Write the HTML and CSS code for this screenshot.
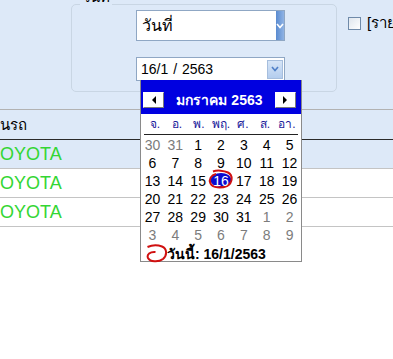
FILE: index.html
```html
<!DOCTYPE html>
<html lang="th">
<head>
  <meta charset="UTF-8">
  <title>ค้นหาตามวันที่</title>
  <meta name="viewport" content="width=device-width,initial-scale=1">
  <link rel="stylesheet" href="styles.css">
</head>
<body>
  <div class="filter">
    <div class="fs">
      <span class="fs-legend">วันที่</span>
      <div class="sel">
        <span class="sel-text">วันที่</span>
        <span class="sel-arrow">
          <svg width="8" height="8" viewBox="0 0 8 8"><path d="M1 2 L4 5.5 L7 2" fill="none" stroke="#fff" stroke-width="1.6"/></svg>
        </span>
      </div>
      <div class="date">
        <span class="date-text">16/1 / 2563</span>
        <span class="date-btn">
          <svg width="10" height="8" viewBox="0 0 10 8"><path d="M2 2 L5 5.5 L8 2" fill="none" stroke="#4f7fc7" stroke-width="1.6"/></svg>
        </span>
      </div>
    </div>
    <label class="chk"><span class="chk-box"></span>[รายการ]</label>
  </div>

  <table class="grid">
    <thead>
      <tr><th>นรถ</th><th></th></tr>
    </thead>
    <tbody>
      <tr class="alt"><td>OYOTA</td><td></td></tr>
      <tr><td>OYOTA</td><td></td></tr>
      <tr><td>OYOTA</td><td></td></tr>
    </tbody>
  </table>

  <!-- ปฏิทินเลือกวันที่ -->
  <div class="cal">
    <div class="cal-head">
      <button class="cal-nav"><span class="tri tri-left"></span></button>
      <span class="cal-title">มกราคม 2563</span>
      <button class="cal-nav"><span class="tri tri-right"></span></button>
    </div>
    <div class="cal-days">
      <span>จ.</span><span>อ.</span><span>พ.</span><span>พฤ.</span><span>ศ.</span><span>ส.</span><span>อา.</span>
    </div>
    <div class="cal-grid" id="calGrid"></div>
    <div class="cal-foot">
      <svg class="loop" width="22" height="19" viewBox="0 0 22 19"><path d="M1.5 3 C6 1 12 1 16 2.5 C21 4.5 21.5 11 17 15 C12.5 18.5 4 18 2 14 C0.5 10.5 4 7.5 9.5 8" fill="none" stroke="#d01010" stroke-width="2"/></svg>
      <span>วันนี้: 16/1/2563</span>
    </div>
  </div>

  <script>
    // วันที่ในปฏิทิน มกราคม 2563
    const days = [30,31,1,2,3,4,5,6,7,8,9,10,11,12,13,14,15,16,17,18,19,20,21,22,23,24,25,26,27,28,29,30,31,1,2,3,4,5,6,7,8,9];
    const grid = document.getElementById('calGrid');
    days.forEach((d, i) => {
      const cell = document.createElement('span');
      const other = i < 2 || i > 32;
      cell.className = 'cal-cell' + (other ? ' other' : '');
      if (!other && d === 16) {
        cell.className += ' today';
        cell.innerHTML = '<svg class="mark" width="28" height="20" viewBox="0 0 28 20"><ellipse cx="14" cy="11" rx="10.5" ry="7" fill="#0a0ad0"/><path d="M6 2.5 C10 1 17 1.5 21 3.5 C26 6 26 14 20 17 C14 19.5 6 19 3.5 14.5 C1.5 10.5 4 6 9 5" fill="none" stroke="#d01010" stroke-width="2"/></svg><b>' + d + '</b>';
      } else {
        cell.textContent = d;
      }
      grid.appendChild(cell);
    });
  </script>
</body>
</html>
```

FILE: styles.css
```css
body { margin: 0; background: #fff; font-family: "Liberation Sans", "Noto Sans", "DejaVu Sans", sans-serif; overflow: hidden; color: #000; }

.filter { height: 105px; padding: 4px 0 0 71px; background: #dde9f8; border-bottom: 1px solid #b2b2b2; display: flex; align-items: flex-start; }
.fs { position: relative; flex-shrink: 0; width: 266px; height: 88px; box-sizing: border-box; border: 1px solid #c9d6e4; border-radius: 5px; padding: 5px 0 0 64px; }
.fs-legend { position: absolute; left: 8px; top: -17px; padding: 0 2px; font-size: 15px; line-height: 18px; background: #dde9f8; }
.sel { width: 149px; height: 31px; box-sizing: border-box; border: 1px solid #8fa7c4; background: #fff; display: flex; align-items: center; }
.sel-text { flex: 1; padding-left: 5px; font-size: 16px; }
.sel-arrow { width: 8px; align-self: stretch; display: flex; align-items: center; justify-content: center; background: linear-gradient(90deg, #5a8bd0, #8fb3e4); }
.date { margin-top: 16px; width: 149px; height: 24px; box-sizing: border-box; border: 1px solid #8fa7c4; background: #fff; display: flex; align-items: center; padding-right: 1px; }
.date-text { flex: 1; padding-left: 4px; font-size: 14px; word-spacing: 1px; }
.date-btn { width: 16px; height: 19px; box-sizing: border-box; border: 1px solid #a6bedd; background: linear-gradient(#d6e5f7, #b4cdee); display: flex; align-items: center; justify-content: center; }

.chk { margin: 7px 0 0 11px; display: flex; align-items: center; gap: 6px; font-size: 15px; white-space: nowrap; }
.chk-box { flex-shrink: 0; width: 11px; height: 11px; border: 1px solid #6f8aa9; background: linear-gradient(135deg, #dfe6ee, #fff); }

.grid { width: 100%; border-collapse: collapse; }
.grid th { height: 28px; padding: 1px 0 0 0; text-align: left; font-weight: normal; font-size: 15px; background: #dde9f8; border-bottom: 1px solid #2a2a2a; }
.grid td { height: 28px; padding: 0; font-size: 18px; color: #33d633; border-bottom: 1px solid #c4c4c4; }
.grid th:first-child, .grid td:first-child { width: 140px; }
.grid tr.alt td { background: #dde9f8; }

.cal { position: absolute; left: 140px; top: 80px; width: 162px; height: 182px; box-sizing: border-box; background: #fff; border: 1px solid #8a8a8a; border-top: 0; }
.cal-head { height: 34px; background: #0000e0; display: flex; align-items: center; justify-content: space-between; padding: 5px 5px 0 2px; box-sizing: border-box; }
.cal-nav { width: 21px; height: 16px; padding: 0; background: #fff; border: 1px solid; border-color: #fff #7a7a7a #7a7a7a #fff; display: flex; align-items: center; justify-content: center; }
.tri { width: 0; height: 0; border-top: 4px solid transparent; border-bottom: 4px solid transparent; }
.tri-left { border-right: 4px solid #000; }
.tri-right { border-left: 4px solid #000; }
.cal-title { color: #fff; font-weight: bold; font-size: 14px; }
.cal-days { display: grid; grid-template-columns: repeat(7, 1fr); margin: 0 3px; height: 20px; align-items: end; border-bottom: 1px solid #222; font-size: 12px; color: #1a1a9a; text-align: center; }
.cal-days span { padding-bottom: 1px; }
.cal-grid { display: grid; grid-template-columns: repeat(7, 1fr); grid-auto-rows: 18px; font-size: 14px; text-align: center; line-height: 18px; padding-top: 1px; }
.cal-cell.other { color: #7c7c7c; }
.cal-cell.today { position: relative; color: #fff; }
.cal-cell.today b { position: relative; font-weight: normal; }
.mark { position: absolute; left: -3px; top: -3px; }
.cal-foot { display: flex; align-items: center; height: 19px; padding-left: 5px; font-size: 14px; font-weight: bold; }
.loop { margin-right: -1px; }
```
